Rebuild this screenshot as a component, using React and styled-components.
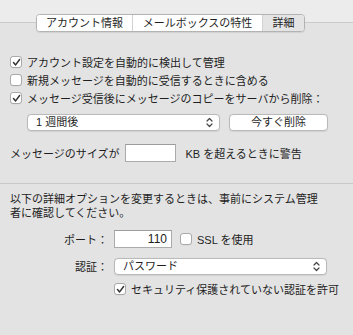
import React from "react";
import styled, { createGlobalStyle } from "styled-components";

const GlobalStyle = createGlobalStyle`
  html, body {
    margin: 0;
    padding: 0;
    background: #e3e3e3;
  }
  body {
    font-family: "Liberation Sans", "Noto Sans CJK JP", sans-serif;
    font-size: 11px;
    color: #1e1e1e;
  }
`;

const Page = styled.div`
  width: 353px;
  height: 335px;
  overflow: hidden;
  background: #e3e3e3;
`;

const Header = styled.div`
  height: 32px;
  box-sizing: border-box;
  padding: 14px 0 0 36px;
  background: linear-gradient(#ececec 0 22px, #cbcbcb 22px 23px, #e3e3e3 23px);
`;

const TabBar = styled.div`
  display: flex;
  width: fit-content;
  height: 18px;
  box-sizing: border-box;
  border: 1px solid #b3b3b3;
  border-radius: 4px;
  background: #fff;
  overflow: hidden;
  box-shadow: 0 0.5px 1px rgba(0, 0, 0, 0.08);
`;

const Tab = styled.div`
  width: ${(p) => p.$w}px;
  box-sizing: border-box;
  text-align: center;
  line-height: 16px;
  white-space: nowrap;
  background: ${(p) => (p.$active ? "#e4e4e4" : "#fff")};
  border-left: ${(p) => (p.$first ? "none" : "1px solid #d2d2d2")};
`;

const Section = styled.div`
  display: flex;
  flex-direction: column;
  padding: 21px 0 0 10px;
`;

const CheckRow = styled.label`
  display: flex;
  align-items: center;
  gap: 5px;
  height: 18px;
  white-space: nowrap;
  margin-left: ${(p) => p.$indent || 0}px;
`;

const Box = styled.span`
  width: 12px;
  height: 12px;
  box-sizing: border-box;
  border: 1px solid #a9a9a9;
  border-radius: 3px;
  background: #fff;
  display: flex;
  align-items: center;
  justify-content: center;
  flex-shrink: 0;
  box-shadow: 0 0.5px 0.5px rgba(0, 0, 0, 0.06);
`;

const ActionRow = styled.div`
  display: flex;
  gap: 9px;
  margin: 7px 0 0 17px;
`;

const Select = styled.div`
  width: ${(p) => p.$w}px;
  height: 17px;
  box-sizing: border-box;
  border: 1px solid #b9b9b9;
  border-radius: 4px;
  background: #fff;
  display: flex;
  align-items: center;
  justify-content: space-between;
  padding: 0 6px 0 8px;
  line-height: 15px;
  box-shadow: 0 0.5px 1px rgba(0, 0, 0, 0.08);
`;

const Button = styled.div`
  width: 99px;
  height: 17px;
  box-sizing: border-box;
  border: 1px solid #b9b9b9;
  border-radius: 4px;
  background: #fff;
  text-align: center;
  line-height: 15px;
  box-shadow: 0 0.5px 1px rgba(0, 0, 0, 0.08);
`;

const SizeRow = styled.div`
  display: flex;
  align-items: center;
  height: 18px;
  margin-top: 13px;
  white-space: nowrap;
`;

const Field = styled.div`
  width: ${(p) => p.$w}px;
  height: 18px;
  box-sizing: border-box;
  border: 1px solid #ababab;
  border-top-color: #9c9c9c;
  background: #fff;
  margin: 0 ${(p) => p.$mr || 0}px 0 ${(p) => p.$ml || 0}px;
  text-align: right;
  padding-right: 4px;
  line-height: 16px;
  font-size: 12px;
`;

const Separator = styled.div`
  height: 1px;
  background: #c9c9c9;
  margin-top: 21px;
`;

const Note = styled.p`
  margin: 8px 0 0 10px;
  width: 315px;
  line-height: 14px;
`;

const Form = styled.div`
  display: flex;
  flex-direction: column;
  margin-top: 10px;
`;

const FormRow = styled.div`
  display: flex;
  align-items: center;
  gap: 6px;
  min-height: 18px;
  margin-top: ${(p) => p.$mt || 0}px;
  white-space: nowrap;
`;

const Label = styled.span`
  width: 108px;
  text-align: right;
  flex-shrink: 0;
`;

const Check = () => (
  <svg width="9" height="9" viewBox="0 0 9 9">
    <path d="M1.5 4.6 L3.6 6.9 L7.6 1.5" fill="none" stroke="#333" strokeWidth="1.5" strokeLinecap="round" strokeLinejoin="round" />
  </svg>
);

const UpDown = () => (
  <svg width="7" height="11" viewBox="0 0 7 11">
    <path d="M1 4 L3.5 1.5 L6 4 M1 7 L3.5 9.5 L6 7" fill="none" stroke="#444" strokeWidth="1.2" strokeLinecap="round" strokeLinejoin="round" />
  </svg>
);

const Checkbox = ({ checked, children, indent }) => (
  <CheckRow $indent={indent}>
    <Box>{checked && <Check />}</Box>
    <span>{children}</span>
  </CheckRow>
);

export default function App() {
  return (
    <Page>
      <GlobalStyle />
      <Header>
        <TabBar>
          <Tab $w={95} $first>アカウント情報</Tab>
          <Tab $w={130}>メールボックスの特性</Tab>
          <Tab $w={42} $active>詳細</Tab>
        </TabBar>
      </Header>

      <Section>
        <Checkbox checked>アカウント設定を自動的に検出して管理</Checkbox>
        <Checkbox>新規メッセージを自動的に受信するときに含める</Checkbox>
        <Checkbox checked>メッセージ受信後にメッセージのコピーをサーバから削除：</Checkbox>
        <ActionRow>
          <Select $w={193}>
            <span>1 週間後</span>
            <UpDown />
          </Select>
          <Button>今すぐ削除</Button>
        </ActionRow>
        <SizeRow>
          メッセージのサイズが
          <Field $w={51} $ml={6} $mr={9} />
          KB を超えるときに警告
        </SizeRow>
      </Section>

      <Separator />

      <Note>以下の詳細オプションを変更するときは、事前にシステム管理者に確認してください。</Note>

      <Form>
        <FormRow>
          <Label>ポート：</Label>
          <Field $w={58} $mr={2}>110</Field>
          <Checkbox>SSL を使用</Checkbox>
        </FormRow>
        <FormRow $mt={9}>
          <Label>認証：</Label>
          <Select $w={213}>
            <span>パスワード</span>
            <UpDown />
          </Select>
        </FormRow>
        <FormRow $mt={5}>
          <Label />
          <Checkbox checked>セキュリティ保護されていない認証を許可</Checkbox>
        </FormRow>
      </Form>
    </Page>
  );
}
